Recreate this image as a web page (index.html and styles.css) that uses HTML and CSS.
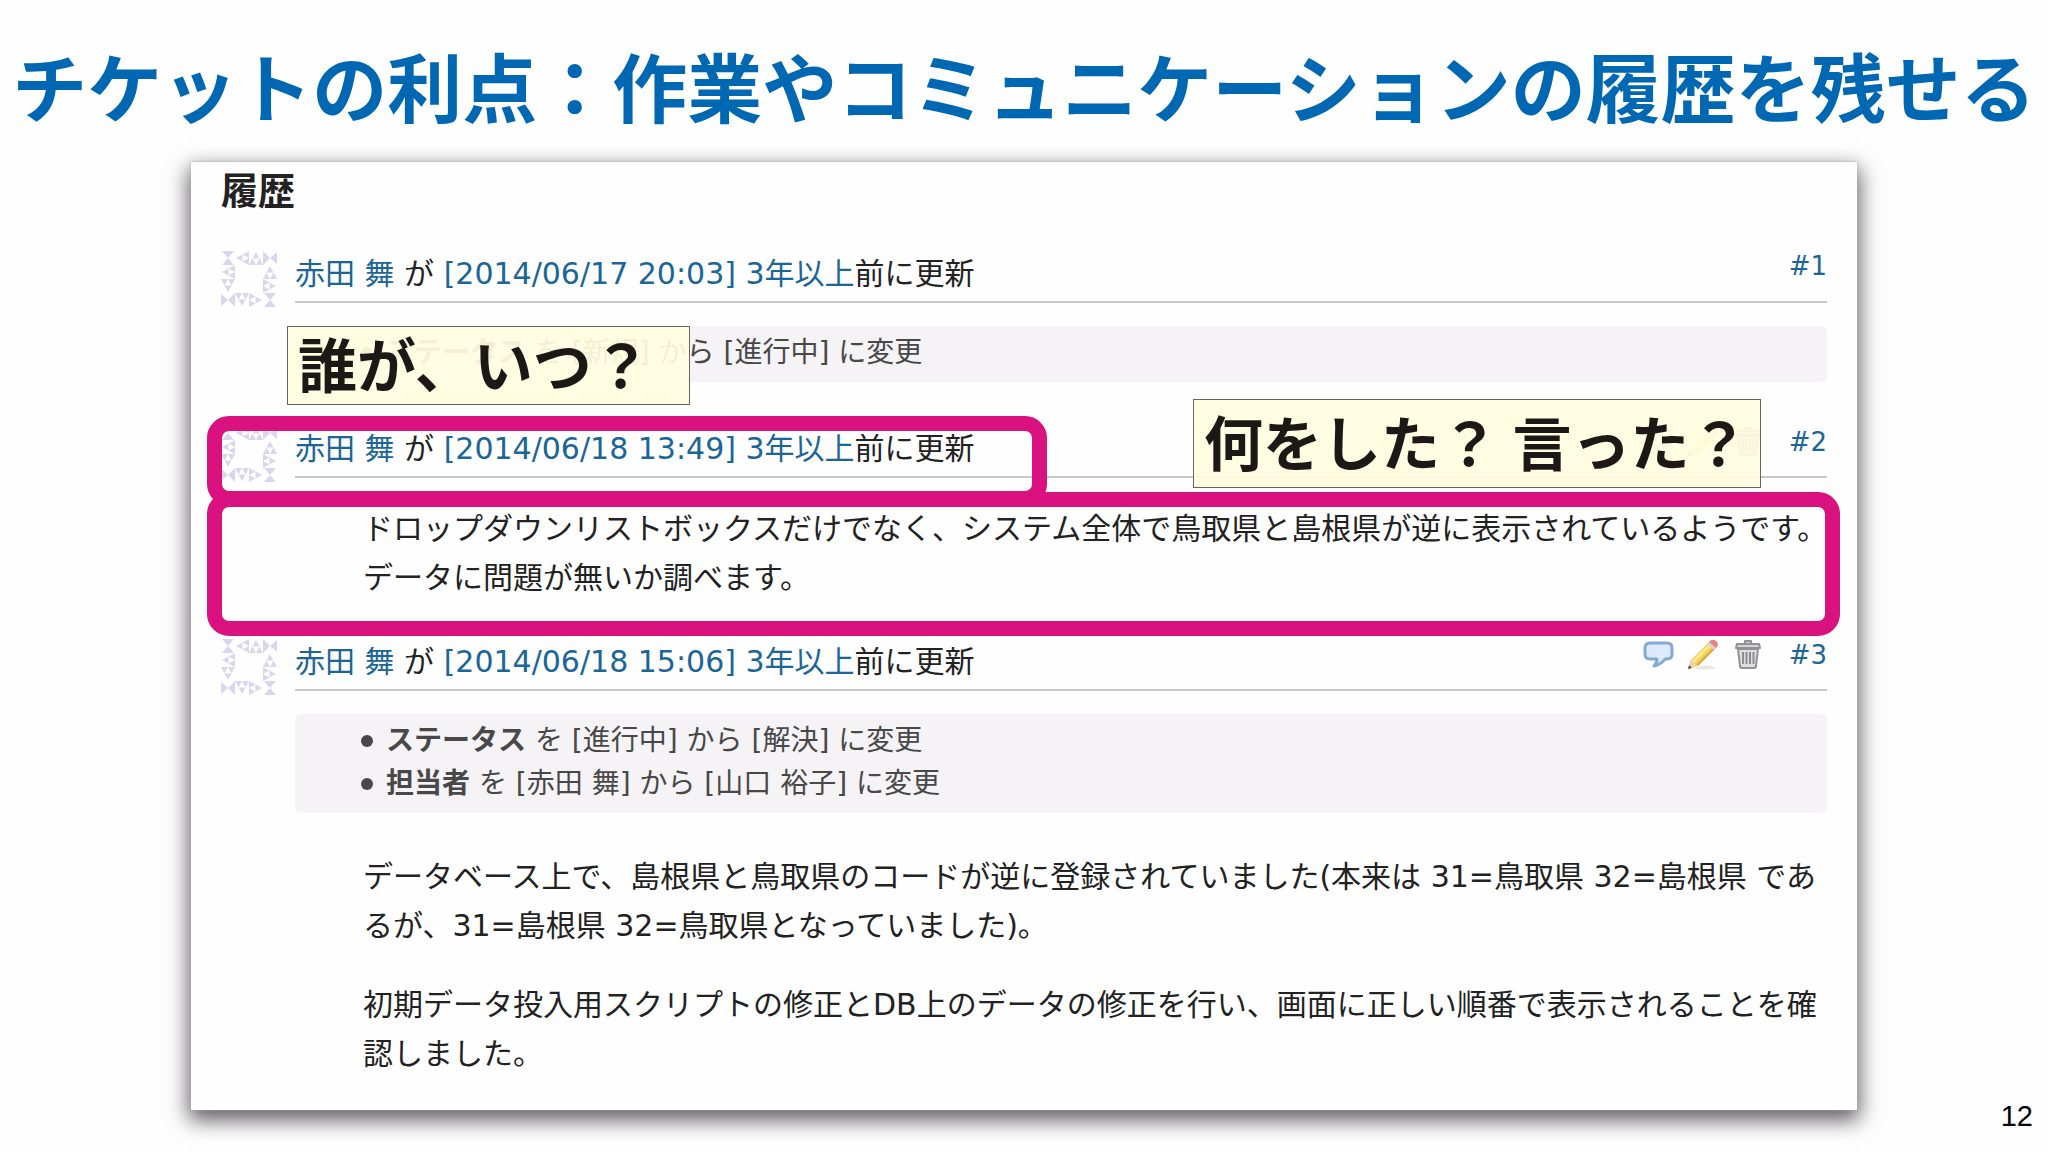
FILE: index.html
```html
<!DOCTYPE html>
<html lang="ja">
<head>
  <meta charset="UTF-8" />
  <meta name="viewport" content="width=device-width, initial-scale=1.0" />
  <title>チケットの利点</title>
  <link rel="stylesheet" href="styles.css">
</head>
<body>
  <!-- shared icons -->
  <svg class="sprite" aria-hidden="true">
    <symbol id="avatar" viewBox="0 0 56 56">
      <g id="tri-up">
        <path d="M35 1L42 14H28ZM35 7.500L31.500 7.500L35 14L38.500 7.500Z" fill-rule="evenodd"/>
      </g>
      <use href="#tri-up" transform="rotate(-90 35 7) translate(0 -14)"/>
      <use href="#tri-up" transform="translate(14 14)"/>
      <use href="#tri-up" transform="translate(14 28) rotate(90 35 7)"/>
      <use href="#tri-up" transform="translate(-14 42) rotate(180 35 7)"/>
      <use href="#tri-up" transform="translate(0 42) rotate(90 35 7)"/>
      <use href="#tri-up" transform="translate(-28 14) rotate(-90 35 7)"/>
      <use href="#tri-up" transform="translate(-28 28) rotate(180 35 7)"/>
      <path d="M1 0H13L7 7L13 14H1L7 7Z"/>
      <path d="M42 0V14L49 7L56 13V1L49 7Z"/>
      <path d="M0 43V55L7 49L14 56V42L7 49Z"/>
      <path d="M43 42H55L49 49L55 56H43L49 49Z"/>
    </symbol>
    <symbol id="comment" viewBox="0 0 32 32">
      <path d="M8 4H25Q30 4 30 9V15Q30 20 25 20H23Q20 25 12 27Q15 24 15 20H8Q3 20 3 15V9Q3 4 8 4Z" fill="#dceafb" stroke="#86a9d3" stroke-width="3" stroke-linejoin="round"/>
    </symbol>
    <symbol id="pencil" viewBox="0 0 32 32">
      <path d="M7 30Q20 23 29 29Q20 32 7 30Z" fill="#e8e8ea"/>
      <path d="M1 30L4 21L22 3L29 9L11 27Z" fill="#f3d35f"/>
      <path d="M9 26L27 8L29 9L11 27Z" fill="#dca942"/>
      <path d="M5 22L22 5L24 7L7 24Z" fill="#fbe995"/>
      <path d="M1 30L4 21L11 27Z" fill="#ecd2a4"/>
      <path d="M1 30L2 26L5 29Z" fill="#555"/>
      <path d="M20 5L23 2L30 8L27 11Z" fill="#d8d5d8"/>
      <path d="M22 3Q25 -1 29 2Q33 5 29 9Z" fill="#ee8284"/>
    </symbol>
    <symbol id="trash" viewBox="0 0 32 32">
      <path d="M13 4V2H19V4M5 5H27L28 9H4Z" fill="#d6d6d8" stroke="#929296" stroke-width="2" stroke-linejoin="round"/>
      <path d="M6 10H26L24 27Q24 29 22 29H10Q8 29 8 27Z" fill="#dededf" stroke="#929296" stroke-width="2"/>
      <path d="M11 13V25M14.500 13V25M18 13V25M21.500 13V25" fill="none" stroke="#8e8e92" stroke-width="2"/>
    </symbol>
  </svg>

  <main class="slide">
    <h1>チケットの利点：作業やコミュニケーションの履歴を残せる</h1>

    <section class="history">
      <h2>履歴</h2>

      <article class="journal">
        <svg class="avatar" aria-hidden="true"><use href="#avatar"/></svg>
        <div class="body">
          <header>
            <h3><a href="#">赤田 舞</a> が <a href="#">[2014/06/17 20:03]</a> <a href="#">3年以上</a>前に更新</h3>
            <div class="actions"><a href="#">#1</a></div>
          </header>
          <ul class="details">
            <li><strong>ステータス</strong> を [新規] から [進行中] に変更</li>
          </ul>
        </div>
      </article>

      <article class="journal">
        <svg class="avatar" aria-hidden="true"><use href="#avatar"/></svg>
        <div class="body">
          <header>
            <h3><a href="#">赤田 舞</a> が <a href="#">[2014/06/18 13:49]</a> <a href="#">3年以上</a>前に更新</h3>
            <div class="actions">
              <button type="button" aria-label="引用"><svg><use href="#comment"/></svg></button>
              <button type="button" aria-label="編集"><svg><use href="#pencil"/></svg></button>
              <button type="button" aria-label="削除"><svg><use href="#trash"/></svg></button>
              <a href="#">#2</a>
            </div>
          </header>
          <div class="wiki">
            <p>ドロップダウンリストボックスだけでなく、システム全体で鳥取県と島根県が逆に表示されているようです。<br>データに問題が無いか調べます。</p>
          </div>
        </div>
      </article>

      <article class="journal">
        <svg class="avatar" aria-hidden="true"><use href="#avatar"/></svg>
        <div class="body">
          <header>
            <h3><a href="#">赤田 舞</a> が <a href="#">[2014/06/18 15:06]</a> <a href="#">3年以上</a>前に更新</h3>
            <div class="actions">
              <button type="button" aria-label="引用"><svg><use href="#comment"/></svg></button>
              <button type="button" aria-label="編集"><svg><use href="#pencil"/></svg></button>
              <button type="button" aria-label="削除"><svg><use href="#trash"/></svg></button>
              <a href="#">#3</a>
            </div>
          </header>
          <ul class="details">
            <li><strong>ステータス</strong> を [進行中] から [解決] に変更</li>
            <li><strong>担当者</strong> を [赤田 舞] から [山口 裕子] に変更</li>
          </ul>
          <div class="wiki">
            <p>データベース上で、島根県と鳥取県のコードが逆に登録されていました(本来は 31=鳥取県 32=島根県 であるが、31=島根県 32=鳥取県となっていました)。</p>
            <p>初期データ投入用スクリプトの修正とDB上のデータの修正を行い、画面に正しい順番で表示されることを確認しました。</p>
          </div>
        </div>
      </article>

      <!-- callouts over the history -->
      <div class="frame frame-who"></div>
      <div class="frame frame-what"></div>
      <div class="note note-who">誰が、いつ？</div>
      <div class="note note-what">何をした？ 言った？</div>
    </section>

    <div class="page-number">12</div>
  </main>
</body>
</html>
```
FILE: styles.css
```css
* {
  box-sizing: border-box;
}
body {
  margin: 0;
  background: #fefefe;
  color: #222;
  font-family: "DejaVu Sans", "Noto Sans CJK JP", sans-serif;
}
h1, h2, h3, p, ul {
  margin: 0;
}
a {
  color: #1c6697;
  text-decoration: none;
}
.sprite {
  position: absolute;
  width: 0;
  height: 0;
}
.slide {
  position: relative;
  min-height: 100vh;
  padding: 40px 0;
}
h1 {
  margin-bottom: 32px;
  color: #0068b2;
  font-family: "Noto Sans CJK JP", sans-serif;
  font-size: 75px;
  line-height: 90px;
  text-align: center;
  white-space: nowrap;
}
.history {
  position: relative;
  margin: 0 191px;
  padding: 8px 30px 32px;
  background: #fefefe;
  box-shadow: 0 0 2px #aaa, 0 8px 20px 2px rgba(40, 35, 40, 0.75);
}
h2 {
  margin-bottom: 43px;
  font-family: "Noto Sans CJK JP", sans-serif;
  font-size: 37px;
  line-height: 38px;
}
.journal {
  display: grid;
  grid-template-columns: 56px 1fr;
  column-gap: 18px;
  align-items: start;
}
.journal + .journal {
  margin-top: 37px;
}
.avatar {
  width: 56px;
  height: 56px;
  fill: #dad6ee;
}
.body {
  min-width: 0;
}
.journal header {
  display: flex;
  justify-content: space-between;
  align-items: flex-start;
  height: 52px;
  border-bottom: 2px solid #c9c7ca;
}
h3 {
  font-size: 30px;
  font-weight: normal;
  line-height: 46px;
}
.actions {
  display: flex;
  align-items: center;
  gap: 13px;
  font-size: 26px;
  line-height: 30px;
}
.actions a {
  margin-left: 12px;
}
.actions button {
  display: flex;
  padding: 0;
  border: none;
  background: none;
  cursor: pointer;
}
.actions svg {
  width: 32px;
  height: 32px;
}
.details {
  margin: 23px 0 7px;
  padding: 5px 0 8px 91px;
  border-radius: 6px;
  background: #f5f3f6;
  color: #484848;
  font-size: 28px;
  line-height: 43px;
  list-style: none;
}
.details li::before {
  content: "";
  float: left;
  width: 12px;
  height: 12px;
  margin: 16px 0 0 -25px;
  border-radius: 50%;
  background: #484848;
}
.wiki {
  margin: 26px -8px 0 68px;
  font-size: 30px;
  line-height: 49px;
}
.details + .wiki {
  margin-top: 39px;
}
.wiki p + p {
  margin-top: 30px;
}
.frame {
  position: absolute;
  left: 16px;
  border: 15px solid #d9127f;
  border-radius: 22px;
}
.frame-who {
  top: 254px;
  width: 840px;
  height: 90px;
}
.frame-what {
  top: 330px;
  right: 17px;
  height: 144px;
}
.note {
  position: absolute;
  padding-left: 10px;
  border: 1px solid #66665c;
  background: rgba(254, 253, 224, 0.93);
  color: #1c1815;
  font-family: "Noto Sans CJK JP", sans-serif;
  font-size: 59px;
  font-weight: bold;
  white-space: nowrap;
}
.note-who {
  top: 164px;
  left: 96px;
  width: 403px;
  padding-bottom: 6px;
  line-height: 71px;
}
.note-what {
  top: 237px;
  right: 96px;
  width: 568px;
  padding-bottom: 6px;
  line-height: 81px;
}
.page-number {
  position: absolute;
  right: 15px;
  bottom: 16px;
  color: #000;
  font-family: "Liberation Sans", sans-serif;
  font-size: 29px;
  line-height: 40px;
}
```
